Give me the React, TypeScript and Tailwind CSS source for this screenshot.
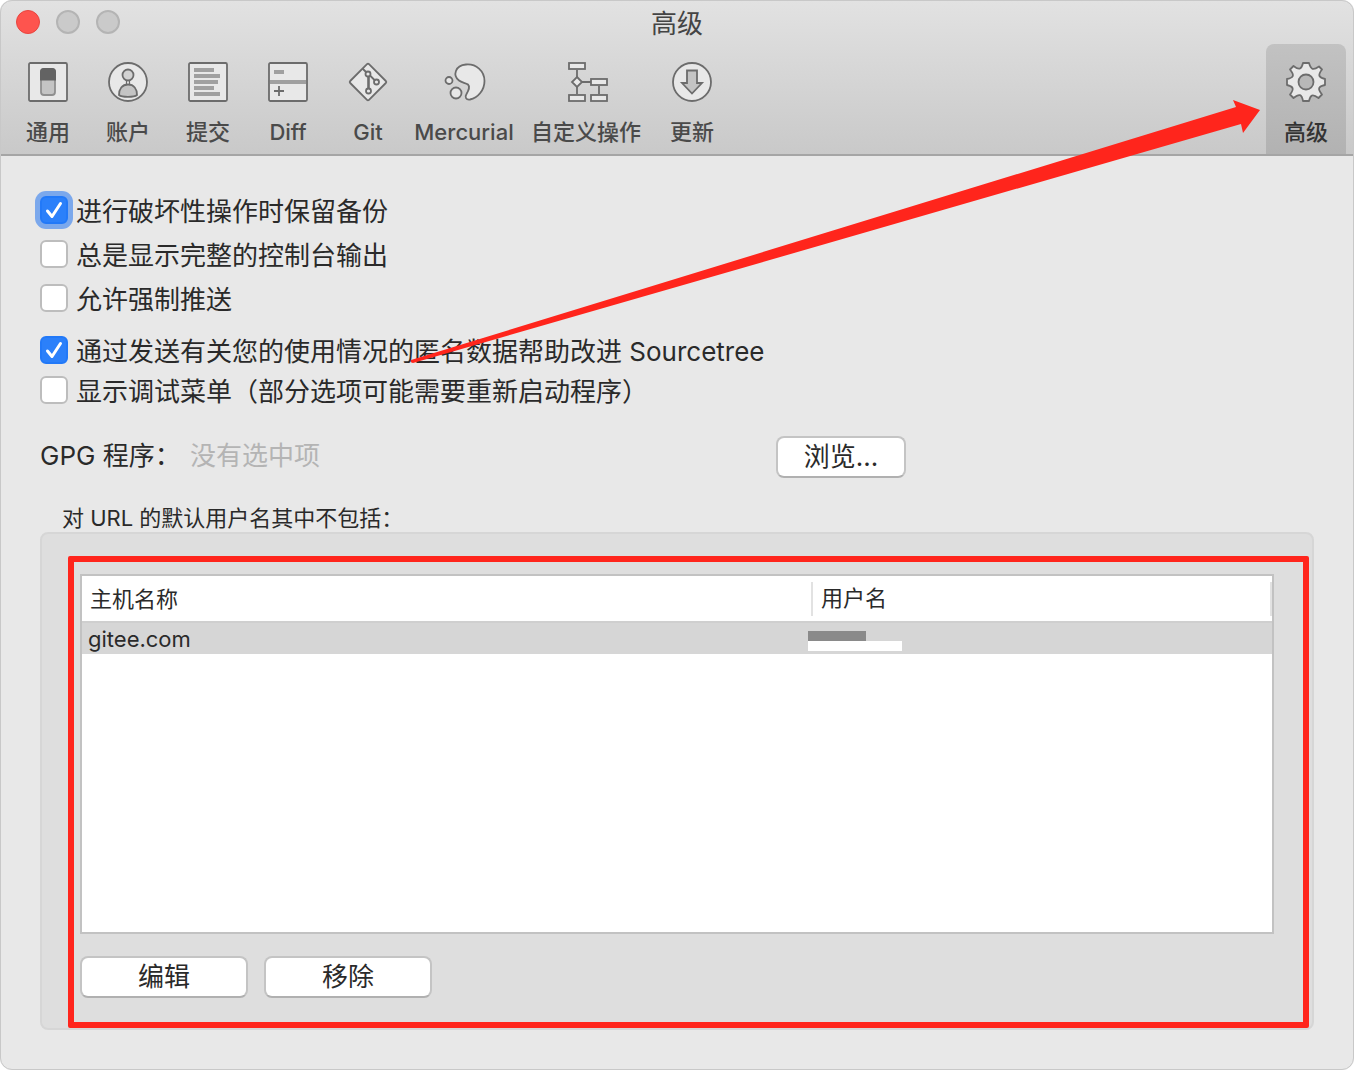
import { useState } from 'react';
import type { ReactNode } from 'react';
import clsx from 'clsx';

type Tab = {
  id: string;
  label: string;
  width: string;
  icon: ReactNode;
};

type CheckOptionProps = {
  id: string;
  label: string;
  defaultChecked?: boolean;
  focused?: boolean;
};

const Icon = ({ children }: { children: ReactNode }) => (
  <svg viewBox="0 0 40 40" className="h-10 w-10 overflow-visible" fill="#e8e8e8" stroke="#6c6c6c" strokeWidth="1.8" aria-hidden="true">
    {children}
  </svg>
);

const tabs: Tab[] = [
  {
    id: 'general',
    label: '通用',
    width: 'w-20',
    icon: (
      <Icon>
        <rect x="1" y="1" width="38" height="38" rx="1.5" />
        <rect x="13" y="7" width="14" height="26" rx="3" fill="#c4c4c4" stroke="#8f8f8f" />
        <path d="M12 18.500V10a4 4 0 0 1 4-4h8a4 4 0 0 1 4 4v8.500z" fill="#636363" stroke="none" />
      </Icon>
    ),
  },
  {
    id: 'accounts',
    label: '账户',
    width: 'w-20',
    icon: (
      <Icon>
        <circle cx="20" cy="20" r="19" />
        <path d="M11 33c0-6 3-10.500 9-10.500s9 4.500 9 10.500c-3 2.400-15 2.400-18 0z" fill="#c4c4c4" />
        <path d="M18.500 18v4.500M21.500 18v4.500" strokeWidth="1.2" />
        <circle cx="20" cy="13" r="5.500" fill="#d2d2d2" />
      </Icon>
    ),
  },
  {
    id: 'commit',
    label: '提交',
    width: 'w-20',
    icon: (
      <Icon>
        <rect x="1" y="1" width="38" height="38" rx="1.5" />
        <path d="M6 8h20M6 14h26M6 20h24M6 26h20M6 32h26" stroke="#a0a0a0" strokeWidth="4" />
      </Icon>
    ),
  },
  {
    id: 'diff',
    label: 'Diff',
    width: 'w-20',
    icon: (
      <Icon>
        <rect x="1" y="1" width="38" height="38" rx="1.5" />
        <path d="M2 20h36" stroke="#a0a0a0" strokeWidth="4" />
        <path d="M6 10h10" stroke="#a0a0a0" strokeWidth="4" />
        <path d="M6 29h10M11 24v10" />
      </Icon>
    ),
  },
  {
    id: 'git',
    label: 'Git',
    width: 'w-20',
    icon: (
      <Icon>
        <path d="M19 2.200q1-1 2 0l16.800 16.800q1 1 0 2L21 37.800q-1 1-2 0L2.200 21q-1-1 0-2z" />
        <path d="M14.500 6.500l5 5M22 13.500l5 5" />
        <path d="M20.500 14v12" strokeWidth="2.600" />
        <circle cx="20" cy="12" r="2.500" />
        <circle cx="28.500" cy="20" r="2.500" />
        <circle cx="20.500" cy="29" r="2.500" />
      </Icon>
    ),
  },
  {
    id: 'mercurial',
    label: 'Mercurial',
    width: 'w-28',
    icon: (
      <Icon>
        <path d="M22 2.500C32 1.500 40.500 9 40.500 19c0 9-6.500 17-14.500 18.500-4 .6-5.500-2.500-3.500-5.500 2-3.500 4-7 1.500-9.500-2.500-2-6-1.500-9-4C8.500 13.500 11 3.500 22 2.500z" />
        <circle cx="5" cy="18.500" r="3.500" />
        <circle cx="12" cy="31" r="5.500" />
      </Icon>
    ),
  },
  {
    id: 'custom',
    label: '自定义操作',
    width: 'w-[132px]',
    icon: (
      <Icon>
        <path d="M11 8v24M11 20h14M33 24v8" />
        <rect x="3" y="1" width="16" height="6" />
        <rect x="3" y="33" width="16" height="6" />
        <rect x="25" y="17" width="16" height="6" />
        <rect x="25" y="33" width="16" height="6" />
        <path d="M11 15l5 5-5 5-5-5z" />
      </Icon>
    ),
  },
  {
    id: 'update',
    label: '更新',
    width: 'w-20',
    icon: (
      <Icon>
        <circle cx="20" cy="20" r="19" />
        <path d="M15 8.500h10v12.500h5L20 31.500 10 21h5z" fill="#c4c4c4" />
      </Icon>
    ),
  },
];

const advancedTab: Tab = {
  id: 'advanced',
  label: '高级',
  width: 'w-20',
  icon: (
    <Icon>
      <path
        strokeLinejoin="round"
        d="M17 1h6q1.500 5 3.500 5.800T33 4.500l3 3q-3.500 4.500-2.500 6.500T39 17v6q-5 1-5.800 3T36 32.500l-3.500 3.500q-4.500-3.500-6.500-2.500T23 39h-6q-1-5-3-5.800T7.500 36L4 32.500q3.500-4.500 2.500-6.500T1 23v-6q5-1 5.800-3T4 7.500L7.500 4q4.500 3.500 6.500 2.500T17 1z"
      />
      <circle cx="20" cy="20" r="7.500" fill="#b8b8b8" />
    </Icon>
  ),
};

const CheckOption = ({ id, label, defaultChecked = false, focused = false }: CheckOptionProps) => (
  <div className="flex h-10 items-center gap-2">
    <span className="relative h-7 w-7 shrink-0">
      <input
        id={id}
        type="checkbox"
        defaultChecked={defaultChecked}
        className={clsx(
          'peer block h-7 w-7 appearance-none rounded-md border-2 border-[#bdbdbd] bg-white checked:border-[#2279f8] checked:bg-[#2b80fa]',
          focused && 'ring-[5px] ring-[#7ba8ec]'
        )}
      />
      <svg
        viewBox="0 0 28 28"
        className="pointer-events-none absolute inset-0 hidden h-7 w-7 peer-checked:block"
        fill="none"
        stroke="white"
        strokeWidth="3"
        strokeLinecap="round"
        strokeLinejoin="round"
      >
        <path d="M7.500 15l4.500 5.500L20.500 7.500" />
      </svg>
    </span>
    <label htmlFor={id} className="pt-[3px] text-[26px] leading-10 whitespace-nowrap">{label}</label>
  </div>
);

const PushButton = ({ children, className }: { children: ReactNode; className: string }) => (
  <button
    type="button"
    className={clsx('h-[42px] rounded-lg border-2 border-[#c4c4c4] border-b-[#b0b0b0] bg-white text-[26px] leading-9', className)}
  >
    {children}
  </button>
);

export default function App() {
  const [active, setActive] = useState('advanced');

  const renderTab = (tab: Tab) => (
    <button
      key={tab.id}
      type="button"
      onClick={() => setActive(tab.id)}
      className={clsx(
        'flex h-[110px] shrink-0 flex-col items-center gap-4 pt-[18px] text-[22px] leading-7 font-medium whitespace-nowrap',
        tab.width,
        active === tab.id ? 'rounded-t-lg bg-linear-to-b from-[#c2c2c2] to-[#b2b2b2] text-[#333333]' : 'text-[#4a4a4a]'
      )}
    >
      {tab.icon}
      <span>{tab.label}</span>
    </button>
  );

  return (
    <div className="bg-white font-[Inter,'Noto_Sans_CJK_SC',sans-serif] text-[#2a2a2a]">
      <div className="relative min-h-screen overflow-hidden rounded-xl bg-[#e8e8e8] outline -outline-offset-1 outline-[#c8c8c8]">
        <header className="border-b-2 border-[#a5a5a5] bg-linear-to-b from-[#e2e2e2] to-[#c9c9c9]">
          <div className="grid h-11 grid-cols-[1fr_auto_1fr] items-center px-4">
            <div className="flex gap-4">
              <button type="button" aria-label="关闭" className="h-6 w-6 rounded-full border border-[#e8453f] bg-[#fe544e]" />
              <button type="button" aria-label="最小化" className="h-6 w-6 rounded-full border-2 border-[#b4b4b4] bg-[#cacaca]" />
              <button type="button" aria-label="缩放" className="h-6 w-6 rounded-full border-2 border-[#b4b4b4] bg-[#cacaca]" />
            </div>
            <h1 className="pt-[3px] text-[26px] leading-10 text-[#444444]">高级</h1>
          </div>
          <nav className="flex px-2">
            {tabs.map(renderTab)}
            <div className="grow" />
            {renderTab(advancedTab)}
          </nav>
        </header>

        <main className="px-10 pt-[34px] pb-10">
          <div className="flex flex-col gap-1">
            <CheckOption id="backup" label="进行破坏性操作时保留备份" defaultChecked focused />
            <CheckOption id="console" label="总是显示完整的控制台输出" />
            <CheckOption id="force" label="允许强制推送" />
          </div>
          <div className="mt-3">
            <CheckOption id="usage" label="通过发送有关您的使用情况的匿名数据帮助改进 Sourcetree" defaultChecked />
            <CheckOption id="debug" label="显示调试菜单（部分选项可能需要重新启动程序）" />
          </div>

          <div className="mt-[26px] flex items-start text-[26px] leading-10">
            <span className="w-[150px] whitespace-nowrap">GPG 程序：</span>
            <span className="w-[586px] text-[#b4b4b4]">没有选中项</span>
            <PushButton className="w-[130px]">浏览...</PushButton>
          </div>

          <section className="mt-[26px]">
            <h2 className="pl-[22px] text-[22px] leading-7">对 URL 的默认用户名其中不包括：</h2>
            <div className="rounded-lg border-2 border-[#d6d6d6] bg-[#dedede] pt-[22px] pr-[3px] pl-[26px]">
              <div className="rounded-xs border-[6px] border-[#ff251c] pt-3 pr-[29px] pb-6 pl-[6px]">
                <div className="h-[360px] border-2 border-[#c2c2c2] bg-white">
                  <table className="w-full table-fixed border-collapse text-[22px] leading-7">
                    <thead>
                      <tr className="h-[46px] border-b-2 border-[#cfcfcf] text-left">
                        <th className="w-[61%] pl-2 font-normal">主机名称</th>
                        <th className="pl-[3px] font-normal">
                          <div className="h-[34px] border-x-2 border-[#e2e2e2] pl-2 leading-8">用户名</div>
                        </th>
                      </tr>
                    </thead>
                    <tbody>
                      <tr className="h-8 bg-[#d6d6d6]">
                        <td className="pl-[6px]">gitee.com</td>
                        <td className="pt-1">
                          <div className="h-[10px] w-[58px] bg-[#8a8a8a]" />
                          <div className="h-[10px] w-[94px] bg-white" />
                        </td>
                      </tr>
                    </tbody>
                  </table>
                </div>
                <div className="mt-[22px] flex gap-4">
                  <PushButton className="w-[168px]">编辑</PushButton>
                  <PushButton className="w-[168px]">移除</PushButton>
                </div>
              </div>
            </div>
          </section>
        </main>

        {/* arrow pointing at the advanced tab */}
        <svg
          viewBox="0 0 850 266"
          className="pointer-events-none absolute top-[98px] right-[94px] h-[266px] w-[850px]"
          fill="#ff251c"
          aria-hidden="true"
        >
          <path d="M1 262L826 9l-3-7 27 10-17 23-2-9L3 265q-3 0-2-3z" />
        </svg>
      </div>
    </div>
  );
}
